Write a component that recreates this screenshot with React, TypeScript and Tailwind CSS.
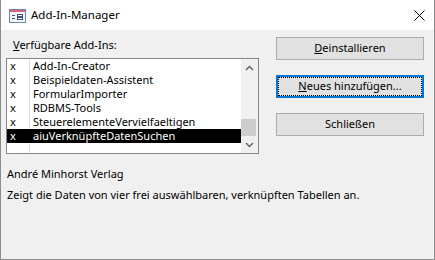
const items = [
  "Add-In-Creator",
  "Beispieldaten-Assistent",
  "FormularImporter",
  "RDBMS-Tools",
  "SteuerelementeVervielfaeltigen",
  "aiuVerknüpfteDatenSuchen",
];

function FormIcon() {
  return (
    <svg width="17" height="14" viewBox="0 0 17 14">
      <rect x="0.5" y="0.5" width="16" height="13" fill="#f4f6fb" stroke="#7484a8" />
      <rect x="1" y="1" width="15" height="2" fill="#d9637f" />
      <path d="M3 6.5h3M3 9.5h3" stroke="#3d4f7c" />
      <rect x="8.5" y="5.5" width="5" height="2" fill="none" stroke="#3d4f7c" />
      <rect x="8.5" y="8.5" width="5" height="2" fill="none" stroke="#3d4f7c" />
    </svg>
  );
}

function Chevron({ up }: { up?: boolean }) {
  return (
    <svg width="9" height="6" viewBox="0 0 9 6">
      <path
        d={up ? "M1 5L4.5 1.5L8 5" : "M1 1L4.5 4.5L8 1"}
        fill="none"
        stroke="#606060"
        strokeWidth="1.4"
      />
    </svg>
  );
}

export default function App() {
  return (
    <div
      className="w-[435px] h-[260px] flex flex-col border-x border-b border-[#8c8c8c] bg-white text-[11px] text-black"
      style={{ fontFamily: '"Noto Sans", "Liberation Sans", sans-serif' }}
    >
      {/* title bar */}
      <div className="h-[30px] flex items-center bg-white">
        <div className="ml-[8px] mt-[1px]">
          <FormIcon />
        </div>
        <span className="ml-[5px] text-[11.5px]">Add-In-Manager</span>
        <svg className="ml-auto mr-[9px]" width="11" height="11" viewBox="0 0 11 11">
          <path d="M0.5 0.5L10.5 10.5M10.5 0.5L0.5 10.5" stroke="#000" strokeWidth="1" />
        </svg>
      </div>

      {/* body */}
      <div className="flex-1 bg-[#f0f0f0] pt-[7px] pl-[5px]">
        <div className="flex">
          <div className="flex flex-col">
            <div className="h-[16px] leading-[16px] pl-[7px]">
              <span className="underline">V</span>erfügbare Add-Ins:
            </div>
            <div className="mt-[5px] w-[253px] h-[96px] border border-[#828790] bg-white flex">
              <div className="w-[234px] flex flex-col">
                {items.map((name, i) => {
                  const sel = i === items.length - 1;
                  return (
                    <div
                      key={name}
                      className={`h-[14px] leading-[14px] flex ${sel ? "bg-black text-white" : ""}`}
                    >
                      <div className={`w-[23px] pl-[3px] border-r ${sel ? "border-black" : "border-[#dcdcdc]"}`}>x</div>
                      <div className="pl-[3px] whitespace-nowrap">{name}</div>
                    </div>
                  );
                })}
                <div className="flex-1 flex">
                  <div className="w-[23px] border-r border-[#dcdcdc]" />
                </div>
              </div>
              <div className="w-[17px] bg-[#f0f0f0] flex flex-col">
                <div className="h-[17px] flex items-center justify-center">
                  <Chevron up />
                </div>
                <div className="flex-1" />
                <div className="h-[17px] w-[15px] bg-[#cdcdcd]" />
                <div className="h-[17px] flex items-center justify-center">
                  <Chevron />
                </div>
              </div>
            </div>
          </div>

          <div className="ml-[17px] w-[148px] flex flex-col gap-[15px]">
            <button className="h-[23px] bg-[#e1e1e1] border border-[#adadad] text-[11px]">
              <span className="underline">D</span>einstallieren
            </button>
            <button className="h-[23px] bg-[#e1e1e1] border-2 border-[#0078d7] text-[11px] p-0">
              <div className="h-full w-full border border-dotted border-black flex items-center justify-center">
                <span>
                  <span className="underline">N</span>eues hinzufügen...
                </span>
              </div>
            </button>
            <button className="h-[23px] bg-[#e1e1e1] border border-[#adadad] text-[11px]">
              Schließen
            </button>
          </div>
        </div>

        <div className="mt-[12px] pl-[1px] leading-[16px]">André Minhorst Verlag</div>
        <div className="mt-[5px] pl-[1px] leading-[16px]">
          Zeigt die Daten von vier frei auswählbaren, verknüpften Tabellen an.
        </div>
      </div>
    </div>
  );
}
